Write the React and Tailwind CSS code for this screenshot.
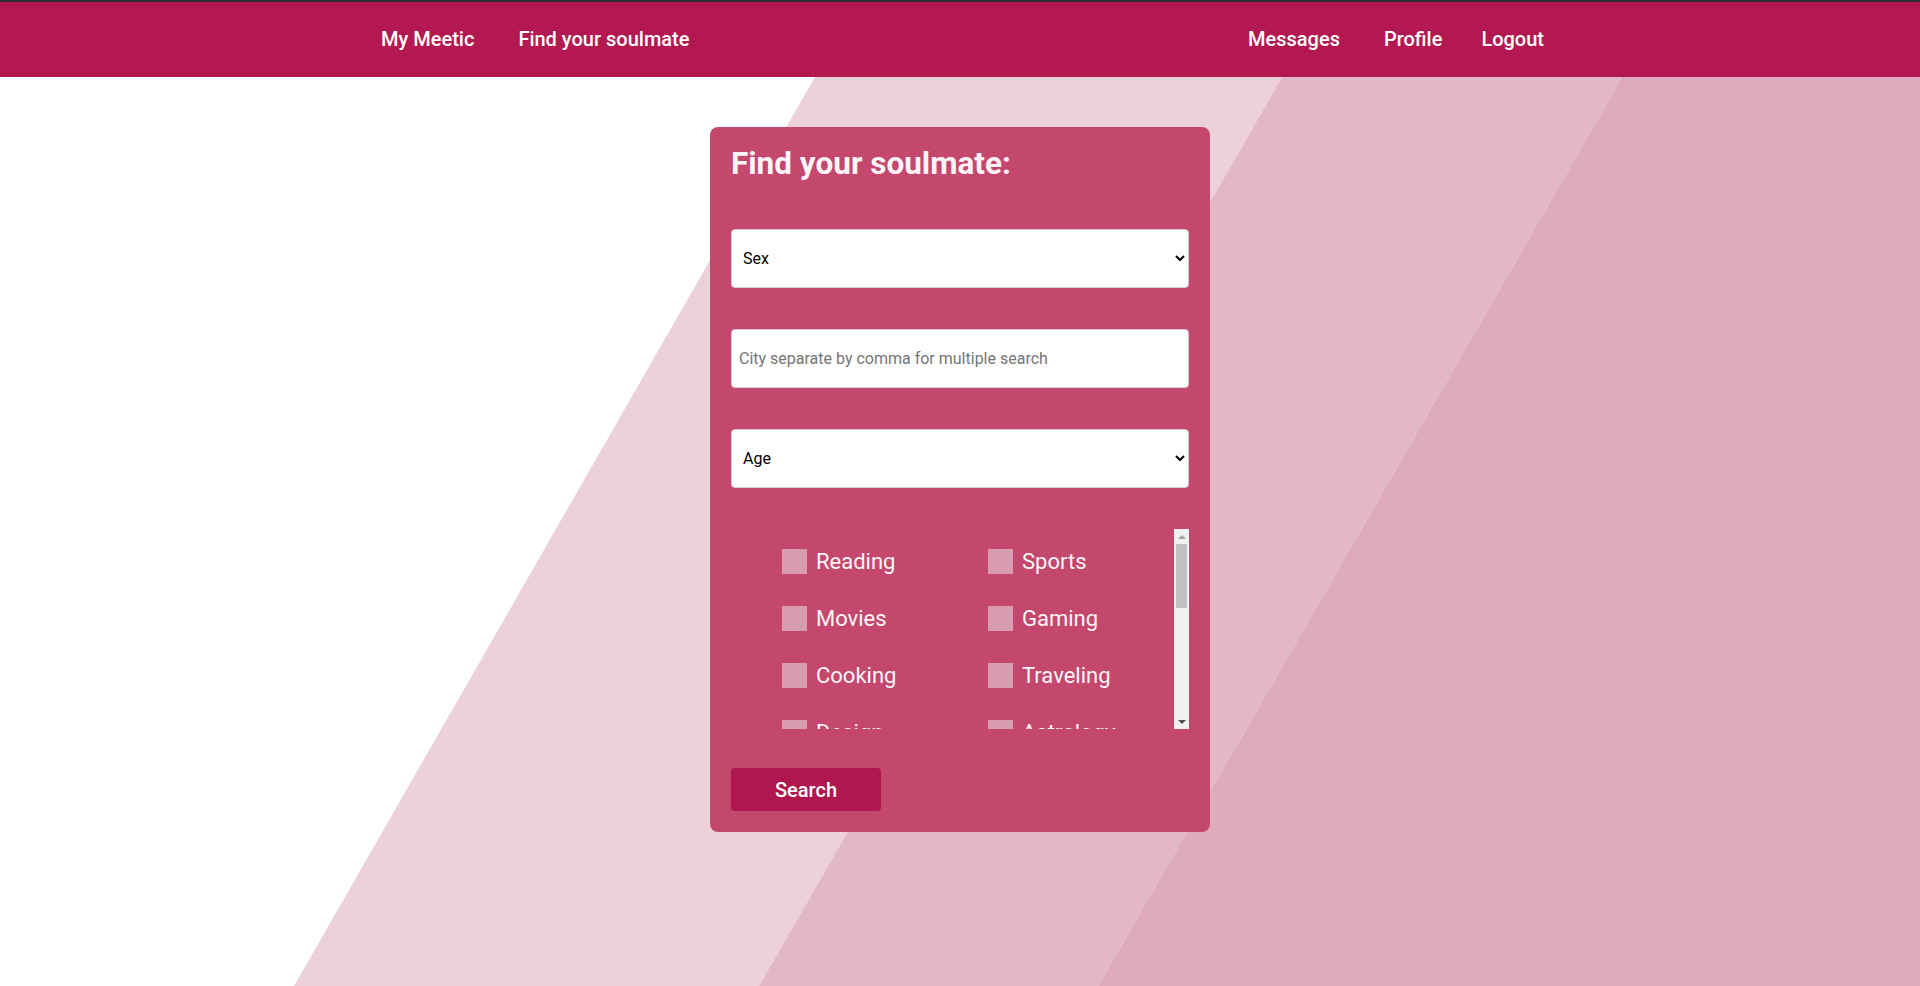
import { useState } from "react";

const interests = [
  "Reading",
  "Sports",
  "Movies",
  "Gaming",
  "Cooking",
  "Traveling",
  "Design",
  "Astrology",
  "Music",
  "Art",
  "Photography",
  "Hiking",
  "Fitness",
  "Animals",
  "Writing",
  "Technology",
  "Fashion",
  "Science",
];

const Navbar = () => {
  return (
    <header className="border-t-2 border-[#2f2c3a] bg-[#b31850]">
      <nav className="flex h-[75px] items-center justify-between pb-[2px] pl-[359px] pr-[354px] text-[20px] font-medium text-white">
        <div className="flex">
          <a className="px-[22px]">My Meetic</a>
          <a className="px-[22px]">Find your soulmate</a>
        </div>
        <div className="flex">
          <a className="px-[22px]">Messages</a>
          <a className="px-[22px]">Profile</a>
          <a className="pl-[17px] pr-[22px]">Logout</a>
        </div>
      </nav>
    </header>
  );
};

const Background = () => {
  return (
    <svg
      className="absolute inset-0 h-full w-full"
      viewBox="0 0 1920 909"
      preserveAspectRatio="none"
    >
      <polygon points="815,0 1282,0 759,909 294,909" fill="#ecd0da" />
      <polygon points="1282,0 1622,0 1098,909 759,909" fill="#e2b8c8" />
      <polygon points="1622,0 1920,0 1920,909 1098,909" fill="#ddaabe" />
    </svg>
  );
};

// classic scrollbar look (the headless page hides native ones)
const ScrollBar = () => {
  return (
    <div className="flex w-[15px] flex-col bg-[#f1f1f1]">
      <div className="flex h-[15px] items-center justify-center">
        <div className="h-0 w-0 border-x-[4px] border-b-[4px] border-x-transparent border-b-[#a3a3a3]" />
      </div>
      <div className="flex-1">
        <div className="mx-[2px] h-[64px] bg-[#c1c1c1]" />
      </div>
      <div className="flex h-[15px] items-center justify-center">
        <div className="h-0 w-0 border-x-[4px] border-t-[4px] border-x-transparent border-t-[#505050]" />
      </div>
    </div>
  );
};

const App = () => {
  const [checked, setChecked] = useState([]);

  const toggle = (name) => {
    setChecked((prev) =>
      prev.includes(name) ? prev.filter((n) => n !== name) : [...prev, name]
    );
  };

  return (
    <div className="flex min-h-screen flex-col bg-white font-['Roboto',sans-serif]">
      <Navbar />

      <main className="relative flex-1 overflow-hidden">
        <Background />

        {/* Search form */}
        <form className="relative mx-auto mt-[50px] flex w-[500px] flex-col rounded-lg bg-[#c4476e] px-[21px] pt-[21px] pb-[21px]">
          <h1 className="text-[31.5px] leading-[32px] font-bold text-[#fdf5f8]">
            Find your soulmate:
          </h1>

          <select className="mt-[49px] h-[59px] rounded-[4px] border border-[#cfcfcf] bg-white px-[7px] text-[16px] text-black">
            <option>Sex</option>
            <option>Man</option>
            <option>Woman</option>
          </select>

          <input
            type="text"
            placeholder="City separate by comma for multiple search"
            className="mt-[41px] h-[59px] rounded-[4px] border border-[#cfcfcf] bg-white px-[7px] text-[16px] text-black placeholder:text-[#757575]"
          />

          <select className="mt-[41px] h-[59px] rounded-[4px] border border-[#cfcfcf] bg-white px-[7px] text-[16px] text-black">
            <option>Age</option>
            <option>18 - 25</option>
            <option>25 - 35</option>
            <option>35 - 45</option>
            <option>45+</option>
          </select>

          {/* Interests */}
          <div className="mt-[41px] flex h-[200px]">
            <div className="flex-1 overflow-y-auto">
              <div className="grid grid-cols-[206px_206px] gap-y-[32px] pt-[20px] pb-[20px] pl-[51px]">
                {interests.map((name, i) => {
                  return (
                    <label
                      key={i}
                      className="flex h-[25px] items-center gap-[9px] text-[22px] text-[#fdf5f8]"
                    >
                      <input
                        type="checkbox"
                        checked={checked.includes(name)}
                        onChange={() => toggle(name)}
                        className="h-[25px] w-[25px] appearance-none bg-[#d89cb1] checked:bg-[#b31850]"
                      />
                      {name}
                    </label>
                  );
                })}
              </div>
            </div>
            <ScrollBar />
          </div>

          <button
            type="button"
            className="mt-[39px] h-[43px] w-[150px] rounded-[4px] bg-[#b0174f] text-[20px] font-medium text-white"
          >
            Search
          </button>
        </form>
      </main>
    </div>
  );
};

export default App;
